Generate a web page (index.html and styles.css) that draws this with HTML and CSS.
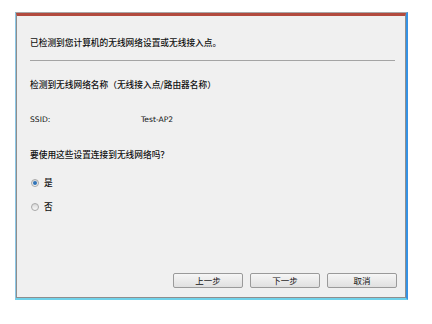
FILE: index.html
```html
<!DOCTYPE html>
<html lang="zh">
<head>
<meta charset="utf-8">
<link rel="stylesheet" href="styles.css">
</head>
<body>
<div class="window">
  <div class="inner">
    <div class="msg first">已检测到您计算机的无线网络设置或无线接入点。</div>
    <div class="sep"></div>
    <div class="msg second">检测到无线网络名称（无线接入点/路由器名称）</div>
    <div class="ssid-row">
      <span class="ssid-label">SSID:</span>
      <span class="ssid-value">Test-AP2</span>
    </div>
    <div class="msg question">要使用这些设置连接到无线网络吗？</div>
    <div class="radio-row yes"><span class="radio checked"></span><span class="rlabel">是</span></div>
    <div class="radio-row no"><span class="radio"></span><span class="rlabel">否</span></div>
    <div class="spacer"></div>
    <div class="buttons">
      <div class="btn">上一步</div>
      <div class="btn">下一步</div>
      <div class="btn">取消</div>
    </div>
  </div>
</div>
</body>
</html>
```
FILE: styles.css
```css
html, body {
  margin: 0;
  padding: 0;
  background: #ffffff;
}
body {
  width: 432px;
  height: 324px;
  padding-top: 12px;
  padding-left: 15px;
  box-sizing: border-box;
  font-family: "Noto Sans CJK SC", "Noto Sans", sans-serif;
  color: #111111;
}
.window {
  width: 393px;
  height: 288px;
  box-sizing: border-box;
  border-top: 1px solid #a8a8a8;
  border-left: 1px solid #8cc6e4;
  border-right: 2px solid #3592e4;
  border-bottom: 2px solid #70d2ea;
}
.inner {
  height: 100%;
  box-sizing: border-box;
  background: #f0f0f0;
  border: 1px solid #8e8e8e;
  border-top: 3px solid #b24a3e;
  display: flex;
  flex-direction: column;
  padding: 0 8px 0 13px;
}
.msg {
  font-size: 8.7px;
  line-height: 12px;
  height: 12px;
  white-space: nowrap;
  font-weight: 500;
}
.first { margin-top: 21px; }
.sep {
  margin-top: 11px;
  height: 1px;
  background: #a4a4a4;
  margin-right: 2px;
}
.second { margin-top: 18px; }
.ssid-row {
  margin-top: 23px;
  height: 12px;
  line-height: 12px;
  display: flex;
  font-family: "DejaVu Sans", sans-serif;
  font-size: 7.6px;
}
.ssid-label { width: 111px; }
.question { margin-top: 23px; }
.radio-row {
  display: flex;
  align-items: center;
  height: 12px;
  font-size: 8.7px;
  line-height: 12px;
  font-weight: 500;
}
.yes { margin-top: 16px; }
.no { margin-top: 12px; }
.radio {
  width: 6px;
  height: 6px;
  border-radius: 50%;
  border: 1px solid #a8a8a8;
  background: linear-gradient(#d8d8d8, #f8f8f8);
  margin-left: 1px;
  margin-right: 5px;
  box-sizing: content-box;
  position: relative;
}
.radio.checked::after {
  content: "";
  position: absolute;
  left: 1px;
  top: 1px;
  width: 4px;
  height: 4px;
  border-radius: 50%;
  background: #2f73b8;
}
.spacer { flex: 1; }
.buttons {
  display: flex;
  justify-content: flex-end;
  gap: 7px;
  margin-bottom: 9px;
}
.btn {
  width: 70px;
  height: 15px;
  box-sizing: border-box;
  border: 1px solid #9a9a9a;
  border-radius: 2px;
  background: linear-gradient(#f6f6f6, #e0e0e0);
  font-size: 8.5px;
  line-height: 13px;
  text-align: center;
}
```
